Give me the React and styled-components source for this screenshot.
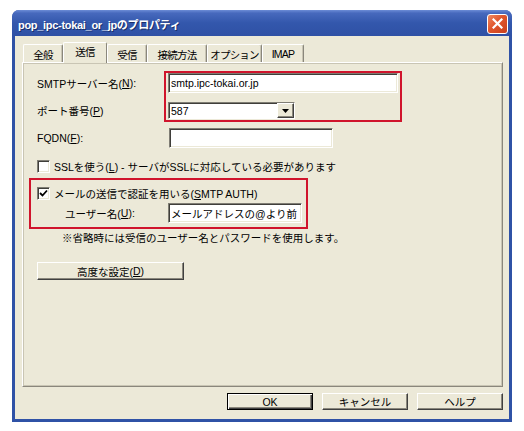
import React from "react";
import styled, { createGlobalStyle } from "styled-components";

const GlobalStyle = createGlobalStyle`
  html, body {
    margin: 0;
    padding: 0;
    background: #ffffff;
  }
  body {
    font-family: "Liberation Sans", "Noto Sans CJK JP", sans-serif;
    font-size: 10.5px;
    color: #000;
  }
  u {
    text-underline-offset: 1px;
  }
`;

const Page = styled.div`
  padding: 10px 0 0 12px;
`;

const Window = styled.div`
  width: 500px;
  height: 412px;
  display: flex;
  flex-direction: column;
  background: #2f52a6;
  border-radius: 7px 7px 0 0;
  box-sizing: border-box;
`;

const TitleBar = styled.div`
  height: 26px;
  flex: none;
  display: flex;
  align-items: center;
  justify-content: space-between;
  padding: 0 4px 0 6px;
  border-radius: 7px 7px 0 0;
  background: linear-gradient(
    #6c8cd6 0%,
    #4769bd 12%,
    #3357ac 50%,
    #2f51a5 100%
  );
`;

const Title = styled.span`
  color: #fff;
  font-weight: bold;
  font-size: 11px;
  letter-spacing: -0.3px;
  text-shadow: 1px 1px 0 #1a2f6a;
  padding-top: 1px;
`;

const CloseButton = styled.div`
  width: 21px;
  height: 20px;
  box-sizing: border-box;
  border: 1px solid #fff;
  border-radius: 3px;
  background: linear-gradient(135deg, #f08a62 0%, #e0552c 45%, #c8401c 100%);
  display: flex;
  align-items: center;
  justify-content: center;
  margin-top: 1px;
`;

const Client = styled.div`
  flex: 1;
  margin: 0 3px 3px;
  background: #ece9d8;
  padding: 6px 0 0 7px;
  display: flex;
  flex-direction: column;
`;

const TabRow = styled.div`
  display: flex;
  height: 20px;
  padding-left: 1px;
  position: relative;
  z-index: 1;
`;

const Tab = styled.div`
  width: ${(p) => p.$w}px;
  box-sizing: border-box;
  height: ${(p) => (p.$active ? 21 : 18)}px;
  margin-top: ${(p) => (p.$active ? 0 : 2)}px;
  background: #ece9d8;
  border-top: 1px solid #fff;
  border-left: 1px solid #fff;
  border-right: 1px solid #8a877c;
  box-shadow: ${(p) => (p.$active ? "none" : "inset -1px 0 0 #c9c5b4")};
  border-radius: 2px 2px 0 0;
  display: flex;
  align-items: center;
  justify-content: center;
  letter-spacing: -0.8px;
  white-space: nowrap;
  padding-top: ${(p) => (p.$active ? 0 : 1)}px;
  padding-bottom: ${(p) => (p.$active ? 3 : 0)}px;
`;

const Panel = styled.div`
  width: 481px;
  height: 325px;
  box-sizing: border-box;
  border: 1px solid;
  border-color: #fff #8a877c #8a877c #fff;
  box-shadow: 1px 1px 0 #c9c5b4 inset, -1px -1px 0 #c9c5b4 inset;
  padding: 8px 0 0 14px;
  display: flex;
  flex-direction: column;
`;

const GroupRow = styled.div`
  display: flex;
  align-items: flex-start;
`;

const LabelColumn = styled.div`
  width: ${(p) => p.$w}px;
  flex: none;
  display: flex;
  flex-direction: column;
  gap: 9px;
  padding-top: 2px;
`;

const Label = styled.div`
  width: ${(p) => (p.$w ? `${p.$w}px` : "auto")};
  height: ${(p) => p.$h || 20}px;
  flex: none;
  display: flex;
  align-items: center;
  white-space: nowrap;
`;

const Marked = styled.div`
  border: 2px solid #d0142c;
  box-sizing: border-box;
`;

const FieldColumn = styled.div`
  width: 234px;
  display: flex;
  flex-direction: column;
  gap: 9px;
  padding: 0 2px 1px;
  box-sizing: border-box;
`;

const TextBox = styled.input`
  width: ${(p) => p.$w}px;
  height: 20px;
  box-sizing: border-box;
  margin: 0;
  padding: 0 2px;
  font: inherit;
  color: #000;
  background: #fff;
  border: 1px solid;
  border-color: #7f7d74 #fff #fff #7f7d74;
  box-shadow: inset 1px 1px 0 #3f3e3a, inset -1px -1px 0 #ece9d8;
  outline: none;
`;

const Combo = styled.div`
  width: 127px;
  height: 17px;
  box-sizing: border-box;
  display: flex;
  background: #fff;
  border: 1px solid;
  border-color: #7f7d74 #fff #fff #7f7d74;
  box-shadow: inset 1px 1px 0 #3f3e3a;
`;

const ComboText = styled.div`
  flex: 1;
  padding: 0 0 0 2px;
  display: flex;
  align-items: center;
`;

const ComboArrow = styled.div`
  width: 17px;
  height: 15px;
  box-sizing: border-box;
  background: #ece9d8;
  border: 1px solid;
  border-color: #fff #404040 #404040 #fff;
  box-shadow: inset -1px -1px 0 #8a877c;
  display: flex;
  align-items: center;
  justify-content: center;
`;

const FieldRow = styled.div`
  display: flex;
  align-items: center;
  margin-top: ${(p) => p.$mt || 0}px;
  padding-left: ${(p) => p.$pl || 0}px;
`;

const CheckRow = styled.div`
  display: flex;
  align-items: center;
  gap: 4px;
  height: 13px;
  margin-top: ${(p) => p.$mt || 0}px;
  white-space: nowrap;
`;

const CheckBox = styled.div`
  width: 13px;
  height: 13px;
  box-sizing: border-box;
  background: #fff;
  border: 1px solid;
  border-color: #7f7d74 #fff #fff #7f7d74;
  box-shadow: inset 1px 1px 0 #3f3e3a, inset -1px -1px 0 #ece9d8;
  display: flex;
  align-items: center;
  justify-content: center;
  flex: none;
`;

const AuthBox = styled(Marked)`
  width: 279px;
  margin: 5px 0 0 -8px;
  padding: 7px 0 4px 6px;
`;

const Note = styled.div`
  height: 14px;
  line-height: 14px;
  margin: 2px 0 0 25px;
  white-space: nowrap;
`;

const Button = styled.div`
  width: ${(p) => p.$w}px;
  height: ${(p) => p.$h}px;
  box-sizing: border-box;
  background: #ece9d8;
  border: 1px solid;
  border-color: ${(p) =>
    p.$default ? "#000" : "#fff #404040 #404040 #fff"};
  box-shadow: ${(p) =>
    p.$default
      ? "inset 1px 1px 0 #fff, inset -1px -1px 0 #404040, inset -2px -2px 0 #8a877c"
      : "inset -1px -1px 0 #8a877c"};
  display: flex;
  align-items: center;
  justify-content: center;
  white-space: nowrap;
  margin-top: ${(p) => p.$mt || 0}px;
`;

const ButtonRow = styled.div`
  width: 481px;
  display: flex;
  justify-content: flex-end;
  gap: 9px;
  margin-top: 6px;
`;

const tabs = [
  { label: "全般", w: 40 },
  { label: "送信", w: 44, active: true },
  { label: "受信", w: 40 },
  { label: "接続方法", w: 60 },
  { label: "オプション", w: 55 },
  { label: "IMAP", w: 42 },
];

const Check = () => (
  <svg width="9" height="9" viewBox="0 0 9 9">
    <path d="M1 4 L3.5 6.5 L8 1.5" fill="none" stroke="#000" strokeWidth="1.8" />
  </svg>
);

const CloseX = () => (
  <svg width="11" height="11" viewBox="0 0 11 11">
    <path d="M1.5 1.5 L9.5 9.5 M9.5 1.5 L1.5 9.5" stroke="#fff" strokeWidth="2.2" strokeLinecap="square" />
  </svg>
);

const DownArrow = () => (
  <svg width="7" height="4" viewBox="0 0 7 4">
    <path d="M0 0 H7 L3.5 4 Z" fill="#000" />
  </svg>
);

export default function App() {
  return (
    <Page>
      <GlobalStyle />
      <Window>
        <TitleBar>
          <Title>pop_ipc-tokai_or_jpのプロパティ</Title>
          <CloseButton>
            <CloseX />
          </CloseButton>
        </TitleBar>
        <Client>
          <TabRow>
            {tabs.map((t) => (
              <Tab key={t.label} $w={t.w} $active={t.active}>
                {t.label}
              </Tab>
            ))}
          </TabRow>
          <Panel>
            <GroupRow>
              <LabelColumn $w={127}>
                <Label>
                  SMTPサーバー名(<u>N</u>):
                </Label>
                <Label $h={17}>
                  ポート番号(<u>P</u>)
                </Label>
              </LabelColumn>
              <Marked>
                <FieldColumn>
                  <TextBox $w={230} defaultValue="smtp.ipc-tokai.or.jp" />
                  <Combo>
                    <ComboText>587</ComboText>
                    <ComboArrow>
                      <DownArrow />
                    </ComboArrow>
                  </Combo>
                </FieldColumn>
              </Marked>
            </GroupRow>

            <FieldRow $mt={6}>
              <Label $w={132}>
                FQDN(<u>F</u>):
              </Label>
              <TextBox $w={164} defaultValue="" />
            </FieldRow>

            <CheckRow $mt={12}>
              <CheckBox />
              <span>
                SSLを使う(<u>L</u>) - サーバがSSLに対応している必要があります
              </span>
            </CheckRow>

            <AuthBox>
              <CheckRow>
                <CheckBox>
                  <Check />
                </CheckBox>
                <span>
                  メールの送信で認証を用いる(<u>S</u>MTP AUTH)
                </span>
              </CheckRow>
              <FieldRow $mt={3} $pl={28}>
                <Label $w={103}>
                  ユーザー名(<u>U</u>):
                </Label>
                <TextBox $w={134} defaultValue="メールアドレスの@より前" />
              </FieldRow>
            </AuthBox>

            <Note>※省略時には受信のユーザー名とパスワードを使用します。</Note>

            <Button $w={147} $h={18} $mt={17}>
              高度な設定(<u>D</u>)
            </Button>
          </Panel>
          <ButtonRow>
            <Button $w={86} $h={17} $default>
              OK
            </Button>
            <Button $w={86} $h={17}>
              キャンセル
            </Button>
            <Button $w={86} $h={17}>
              ヘルプ
            </Button>
          </ButtonRow>
        </Client>
      </Window>
    </Page>
  );
}
